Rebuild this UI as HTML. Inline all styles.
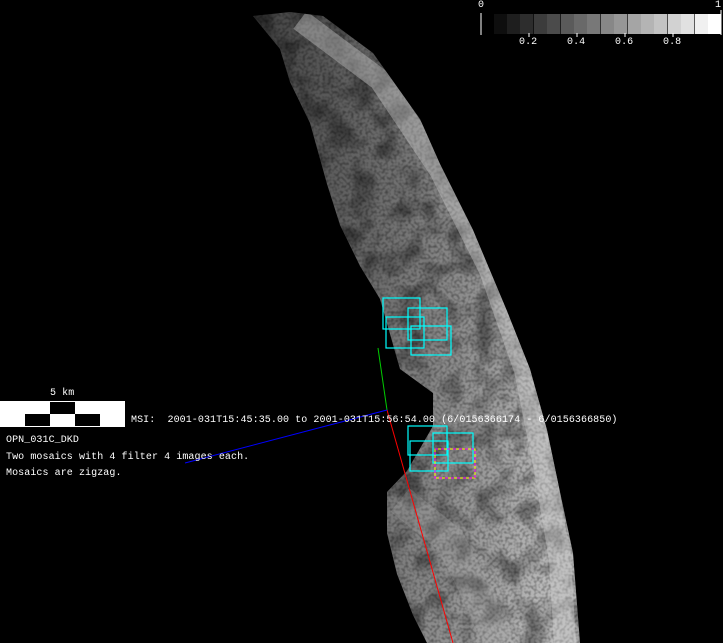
<!DOCTYPE html>
<html><head><style>
body{margin:0;background:#000;width:723px;height:643px;overflow:hidden;position:relative;font-family:"Liberation Mono",monospace;}
.t{position:absolute;color:#fff;font-size:10px;white-space:pre;line-height:12px;letter-spacing:0.08px}
</style></head><body>
<svg width="723" height="643" style="position:absolute;left:0;top:0">
<defs>
<filter id="n" x="0" y="0" width="100%" height="100%">
<feTurbulence type="fractalNoise" baseFrequency="0.35" numOctaves="1" seed="5"/>
<feColorMatrix type="matrix" values="0 0 0 0 0  0 0 0 0 0  0 0 0 0 0  2.5 0 0 0 -1.0"/>
<feComposite in2="SourceGraphic" operator="in"/>
</filter>
<filter id="m" x="0" y="0" width="100%" height="100%">
<feTurbulence type="fractalNoise" baseFrequency="0.04" numOctaves="2" seed="9"/>
<feColorMatrix type="matrix" values="0 0 0 0 0  0 0 0 0 0  0 0 0 0 0  3 0 0 0 -1.3"/>
<feComposite in2="SourceGraphic" operator="in"/>
</filter>
<linearGradient id="g" x1="0" y1="0" x2="1" y2="0.15">
<stop offset="0" stop-color="#404040"/><stop offset="0.45" stop-color="#6e6e6e"/><stop offset="0.8" stop-color="#9a9a9a"/><stop offset="1" stop-color="#b8b8b8"/>
</linearGradient>
<clipPath id="c"><path id="sp" d="M253,16 L290,12 L323,16 L373,53 L420,119 L440,164 L473,230 L507,311 L530,369 L547,430 L560,492 L573,553 L580,643 L427,643 L413,615 L397,574 L387,533 L387,492 L407,471 L433,426 L433,393 L400,369 L380,299 L360,266 L340,225 L327,184 L310,123 L290,82 L280,49 Z"/></clipPath>
</defs>
<use href="#sp" fill="url(#g)"/>
<g clip-path="url(#c)">
<rect x="240" y="0" width="360" height="643" fill="#000" filter="url(#n)" opacity="0.35"/>
<rect x="240" y="0" width="360" height="643" fill="#000" filter="url(#m)" opacity="0.4"/>
<path d="M300,20 L380,80 L440,170 L490,270 L525,370 L545,470 L560,560 L565,643" stroke="#d0d0d0" stroke-width="22" fill="none" opacity="0.4"/>
<path d="M400,500 L450,540 L480,600 L500,643" stroke="#aaa" stroke-width="30" fill="none" opacity="0.25"/>
</g>
<g fill="none" stroke="#0ff" stroke-width="1.2">
<rect x="383" y="298" width="37" height="31"/><rect x="408" y="308" width="39" height="32"/><rect x="386" y="317" width="38" height="31"/><rect x="411" y="326" width="40" height="29"/>
<rect x="408" y="426" width="39" height="29"/><rect x="433" y="433" width="40" height="30"/><rect x="410" y="441" width="38" height="30"/>
</g>
<rect x="435" y="449" width="40" height="29" fill="none" stroke="#ff0"/>
<rect x="435" y="449" width="40" height="29" fill="none" stroke="#f0f" stroke-dasharray="3,3"/>
<line x1="378" y1="348" x2="387" y2="410" stroke="#0c0"/>
<line x1="387" y1="410" x2="453" y2="643" stroke="#f00"/>
<line x1="185" y1="463" x2="387" y2="410" stroke="#00f"/>
<g>
<rect x="494" y="14" width="13.4" height="20" fill="#0e0e0e"/><rect x="507" y="14" width="13.4" height="20" fill="#1e1e1e"/><rect x="520" y="14" width="13.4" height="20" fill="#2d2d2d"/><rect x="534" y="14" width="13.4" height="20" fill="#3c3c3c"/><rect x="547" y="14" width="13.4" height="20" fill="#4b4b4b"/><rect x="561" y="14" width="13.4" height="20" fill="#5a5a5a"/><rect x="574" y="14" width="13.4" height="20" fill="#696969"/><rect x="587" y="14" width="13.4" height="20" fill="#787878"/><rect x="601" y="14" width="13.4" height="20" fill="#878787"/><rect x="614" y="14" width="13.4" height="20" fill="#969696"/><rect x="628" y="14" width="13.4" height="20" fill="#a5a5a5"/><rect x="641" y="14" width="13.4" height="20" fill="#b4b4b4"/><rect x="654" y="14" width="13.4" height="20" fill="#c3c3c3"/><rect x="668" y="14" width="13.4" height="20" fill="#d2d2d2"/><rect x="681" y="14" width="13.4" height="20" fill="#e1e1e1"/><rect x="695" y="14" width="13.4" height="20" fill="#f0f0f0"/><rect x="708" y="14" width="13" height="20" fill="#fff"/>
</g>
<g stroke="#fff"><line x1="481" y1="13" x2="481" y2="35"/><line x1="529" y1="33" x2="529" y2="37"/><line x1="577" y1="33" x2="577" y2="37"/><line x1="625" y1="33" x2="625" y2="37"/><line x1="673" y1="33" x2="673" y2="37"/><line x1="721" y1="10" x2="721" y2="35"/></g>
<rect x="0.5" y="401.5" width="124" height="25" fill="#fff" stroke="#fff"/>
<rect x="50" y="402" width="25" height="12" fill="#000"/>
<rect x="25" y="414" width="25" height="12" fill="#000"/><rect x="75" y="414" width="25" height="12" fill="#000"/>
</svg>
<div class="t" style="left:478px;top:0px">0</div>
<div class="t" style="left:715px;top:0px">1</div>
<div class="t" style="left:519px;top:37px">0.2</div>
<div class="t" style="left:567px;top:37px">0.4</div>
<div class="t" style="left:615px;top:37px">0.6</div>
<div class="t" style="left:663px;top:37px">0.8</div>
<div class="t" style="left:50px;top:388px">5 km</div>
<div class="t" style="left:131px;top:415px">MSI:  2001-031T15:45:35.00 to 2001-031T15:56:54.00 (6/0156366174 - 6/0156366850)</div>
<div class="t" style="left:6px;top:435px">OPN_031C_DKD</div>
<div class="t" style="left:6px;top:452px">Two mosaics with 4 filter 4 images each.</div>
<div class="t" style="left:6px;top:468px">Mosaics are zigzag.</div>
</body></html>
